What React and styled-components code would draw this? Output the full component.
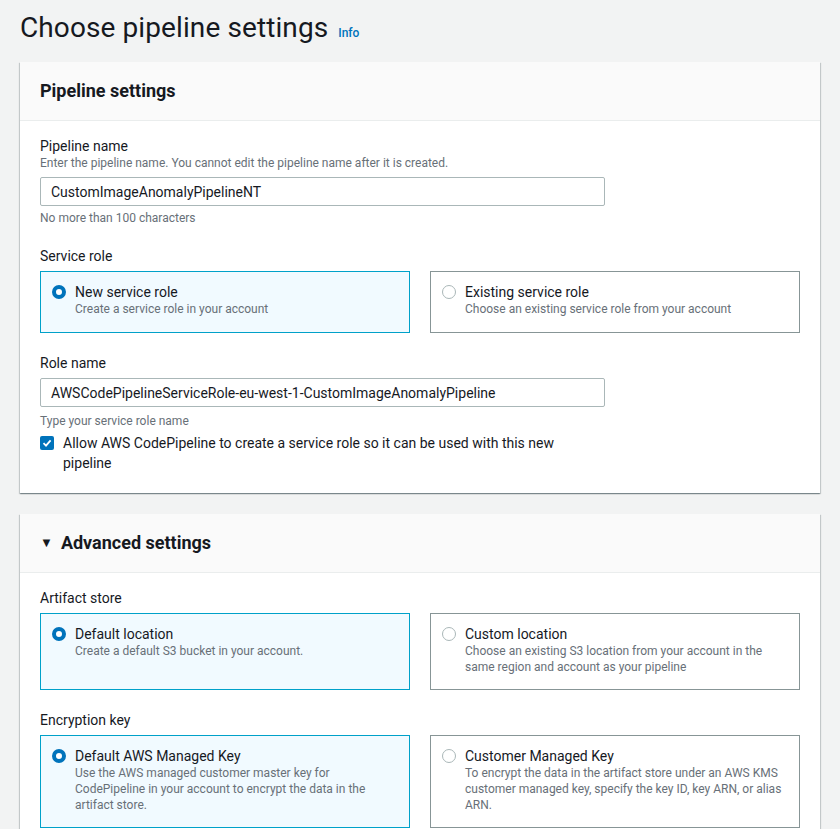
import React from 'react'
import styled, { createGlobalStyle } from 'styled-components'

const GlobalStyle = createGlobalStyle`
  body {
    margin: 0;
    background: #f2f3f3;
    font-family: Roboto, "Open Sans", Arial, sans-serif;
    color: #16191f;
  }
`

const Page = styled.div`
  padding: 10px 20px 20px 20px;
  display: flex;
  flex-direction: column;
  gap: 21px;
`

const TitleRow = styled.div`
  display: flex;
  align-items: baseline;
  gap: 10px;
  margin-bottom: -5px;
`

const Title = styled.h1`
  margin: 0;
  font-size: 28px;
  line-height: 36px;
  font-weight: 400;
  letter-spacing: 0.1px;
`

const InfoLink = styled.a`
  font-size: 12px;
  color: #0073bb;
  text-decoration: none;
  font-weight: 500;
`

const Card = styled.section`
  background: #fff;
  box-shadow: 0 1px 1px 0 rgba(0, 28, 36, 0.3), 1px 1px 1px 0 rgba(0, 28, 36, 0.15),
    -1px 1px 1px 0 rgba(0, 28, 36, 0.15);
`

const CardHeader = styled.header`
  background: #fafafa;
  border-bottom: 1px solid #eaeded;
  padding: 18px 20px;
  display: flex;
  align-items: center;
  gap: 8px;
`

const CardTitle = styled.h2`
  margin: 0;
  font-size: 18px;
  line-height: 22px;
  font-weight: 700;
`

const Caret = styled.span`
  font-size: 13px;
  line-height: 22px;
`

const CardBody = styled.div`
  padding: 16px 20px 20px 20px;
  display: flex;
  flex-direction: column;
  gap: 21px;
`

const Field = styled.div`
  display: flex;
  flex-direction: column;
`

const Label = styled.label`
  font-size: 14px;
  line-height: 18px;
`

const Description = styled.div`
  font-size: 12px;
  line-height: 16px;
  color: #687078;
  margin-top: ${p => p.$top || 0}px;
`

const Input = styled.div`
  margin-top: 6px;
  width: 565px;
  height: 29px;
  box-sizing: border-box;
  border: 1px solid #aab7b8;
  border-radius: 2px;
  padding: 0 10px;
  display: flex;
  align-items: center;
  font-size: 14px;
`

const TileGrid = styled.div`
  margin-top: 6px;
  display: grid;
  grid-template-columns: 1fr 1fr;
  gap: 20px;
`

const Tile = styled.div`
  box-sizing: border-box;
  border: 1px solid ${p => (p.$selected ? '#00a1c9' : '#879596')};
  background: ${p => (p.$selected ? '#f1faff' : '#fff')};
  padding: 11px 14px 14px 11px;
  display: flex;
  gap: 9px;
  min-height: ${p => p.$h}px;
`

const Radio = styled.span`
  flex: none;
  width: 14px;
  height: 14px;
  box-sizing: border-box;
  border-radius: 50%;
  margin-top: 2px;
  border: ${p => (p.$checked ? '4px solid #0073bb' : '1px solid #aab7b8')};
  background: #fff;
`

const TileText = styled.div`
  display: flex;
  flex-direction: column;
`

const TileTitle = styled.span`
  font-size: 14px;
  line-height: 18px;
`

const CheckRow = styled.div`
  margin-top: 4px;
  display: flex;
  gap: 9px;
  width: 565px;
  font-size: 14px;
  line-height: 20px;
`

const CheckBox = styled.span`
  flex: none;
  width: 14px;
  height: 14px;
  margin-top: 3px;
  border-radius: 2px;
  background: #0073bb;
  display: flex;
  align-items: center;
  justify-content: center;
`

const RadioTile = ({ selected, title, desc, h }) => (
  <Tile $selected={selected} $h={h}>
    <Radio $checked={selected} />
    <TileText>
      <TileTitle>{title}</TileTitle>
      <Description>{desc}</Description>
    </TileText>
  </Tile>
)

export default function App() {
  return (
    <>
      <GlobalStyle />
      <Page>
        <TitleRow>
          <Title>Choose pipeline settings</Title>
          <InfoLink>Info</InfoLink>
        </TitleRow>

        <Card>
          <CardHeader>
            <CardTitle>Pipeline settings</CardTitle>
          </CardHeader>
          <CardBody>
            <Field>
              <Label>Pipeline name</Label>
              <Description>Enter the pipeline name. You cannot edit the pipeline name after it is created.</Description>
              <Input>CustomImageAnomalyPipelineNT</Input>
              <Description $top={4}>No more than 100 characters</Description>
            </Field>
            <Field>
              <Label>Service role</Label>
              <TileGrid>
                <RadioTile selected h={62} title="New service role" desc="Create a service role in your account" />
                <RadioTile h={62} title="Existing service role" desc="Choose an existing service role from your account" />
              </TileGrid>
            </Field>
            <Field>
              <Label>Role name</Label>
              <Input>AWSCodePipelineServiceRole-eu-west-1-CustomImageAnomalyPipeline</Input>
              <Description $top={6}>Type your service role name</Description>
              <CheckRow>
                <CheckBox>
                  <svg width="10" height="10" viewBox="0 0 10 10">
                    <path d="M1.5 5.2 L4 7.6 L8.6 2.4" fill="none" stroke="#fff" strokeWidth="1.8" />
                  </svg>
                </CheckBox>
                <span>Allow AWS CodePipeline to create a service role so it can be used with this new pipeline</span>
              </CheckRow>
            </Field>
          </CardBody>
        </Card>

        <Card>
          <CardHeader>
            <Caret>▼</Caret>
            <CardTitle>Advanced settings</CardTitle>
          </CardHeader>
          <CardBody>
            <Field>
              <Label>Artifact store</Label>
              <TileGrid>
                <RadioTile selected h={76} title="Default location" desc="Create a default S3 bucket in your account." />
                <RadioTile
                  h={76}
                  title="Custom location"
                  desc="Choose an existing S3 location from your account in the same region and account as your pipeline"
                />
              </TileGrid>
            </Field>
            <Field>
              <Label>Encryption key</Label>
              <TileGrid>
                <RadioTile
                  selected
                  title="Default AWS Managed Key"
                  desc="Use the AWS managed customer master key for CodePipeline in your account to encrypt the data in the artifact store."
                />
                <RadioTile
                  title="Customer Managed Key"
                  desc="To encrypt the data in the artifact store under an AWS KMS customer managed key, specify the key ID, key ARN, or alias ARN."
                />
              </TileGrid>
            </Field>
          </CardBody>
        </Card>
      </Page>
    </>
  )
}
